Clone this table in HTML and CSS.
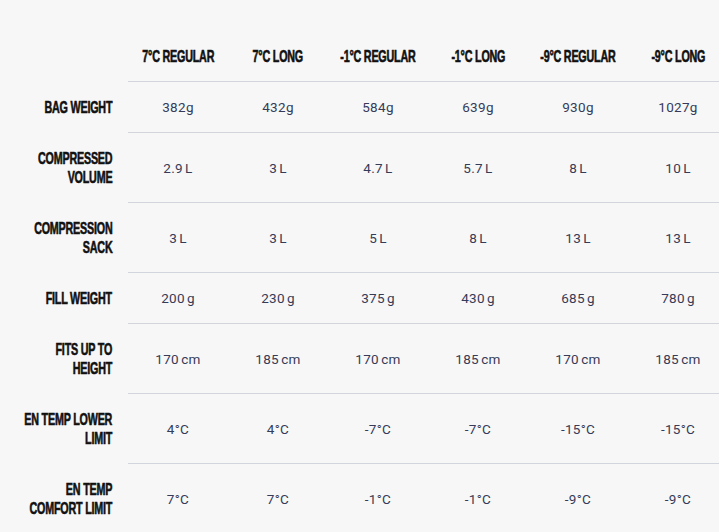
FILE: index.html
```html
<!DOCTYPE html>
<html>
<head>
<meta charset="utf-8">
<link rel="stylesheet" href="styles.css">
</head>
<body>
<div class="wrap">
<table class="specs">
  <thead>
    <tr>
      <th class="label"></th>
      <th class="col"><div class="box"><span class="cond">7°C REGULAR</span></div></th>
      <th class="col"><div class="box"><span class="cond">7°C LONG</span></div></th>
      <th class="col"><div class="box"><span class="cond">-1°C REGULAR</span></div></th>
      <th class="col"><div class="box"><span class="cond">-1°C LONG</span></div></th>
      <th class="col"><div class="box"><span class="cond">-9°C REGULAR</span></div></th>
      <th class="col"><div class="box"><span class="cond">-9°C LONG</span></div></th>
    </tr>
  </thead>
  <tbody>
    <tr>
      <th class="label"><div class="box"><span class="cond">BAG WEIGHT</span></div></th>
      <td>382g</td><td>432g</td><td>584g</td><td>639g</td><td>930g</td><td>1027g</td>
    </tr>
    <tr>
      <th class="label"><div class="box"><span class="cond">COMPRESSED<br>VOLUME</span></div></th>
      <td>2.9 L</td><td>3 L</td><td>4.7 L</td><td>5.7 L</td><td>8 L</td><td>10 L</td>
    </tr>
    <tr>
      <th class="label"><div class="box"><span class="cond">COMPRESSION<br>SACK</span></div></th>
      <td>3 L</td><td>3 L</td><td>5 L</td><td>8 L</td><td>13 L</td><td>13 L</td>
    </tr>
    <tr>
      <th class="label"><div class="box"><span class="cond">FILL WEIGHT</span></div></th>
      <td>200 g</td><td>230 g</td><td>375 g</td><td>430 g</td><td>685 g</td><td>780 g</td>
    </tr>
    <tr>
      <th class="label"><div class="box"><span class="cond">FITS UP TO<br>HEIGHT</span></div></th>
      <td>170 cm</td><td>185 cm</td><td>170 cm</td><td>185 cm</td><td>170 cm</td><td>185 cm</td>
    </tr>
    <tr>
      <th class="label"><div class="box"><span class="cond">EN TEMP LOWER<br>LIMIT</span></div></th>
      <td>4°C</td><td>4°C</td><td>-7°C</td><td>-7°C</td><td>-15°C</td><td>-15°C</td>
    </tr>
    <tr>
      <th class="label"><div class="box"><span class="cond">EN TEMP<br>COMFORT LIMIT</span></div></th>
      <td>7°C</td><td>7°C</td><td>-1°C</td><td>-1°C</td><td>-9°C</td><td>-9°C</td>
    </tr>
  </tbody>
</table>
</div>
</body>
</html>
```
FILE: styles.css
```css
html, body {
  margin: 0;
  padding: 0;
  background: #f7f7f7;
  overflow: hidden;
}
.wrap {
  padding-top: 31px;
  width: 728px;
}
.specs {
  border-collapse: separate;
  border-spacing: 0;
  table-layout: fixed;
  width: 728px;
}
.specs th, .specs td {
  padding: 16px 0 15px;
  line-height: 19px;
  vertical-align: middle;
}
.specs .label {
  width: 112px;
  padding-right: 16px;
  border-bottom: 1px solid transparent;
}
.col {
  width: 100px;
  border-bottom: 1px solid #d3d5dc;
}
.box {
  display: flex;
  justify-content: center;
}
.label .box {
  justify-content: flex-end;
}
.cond {
  flex: none;
  display: block;
  font-family: "Liberation Sans", Arial, sans-serif;
  font-weight: bold;
  font-size: 16.5px;
  letter-spacing: -0.3px;
  color: #111;
  white-space: nowrap;
  text-align: right;
  transform: scaleX(0.65);
  -webkit-text-stroke: 0.6px #111;
}
.col .cond {
  transform-origin: center;
}
.label .cond {
  transform-origin: right center;
}
.specs td {
  text-align: center;
  font-family: Roboto, "Liberation Sans", sans-serif;
  font-size: 13.5px;
  letter-spacing: 0.3px;
  color: #353b58;
  border-bottom: 1px solid #d3d5dc;
  word-spacing: -1.5px;
}
```
